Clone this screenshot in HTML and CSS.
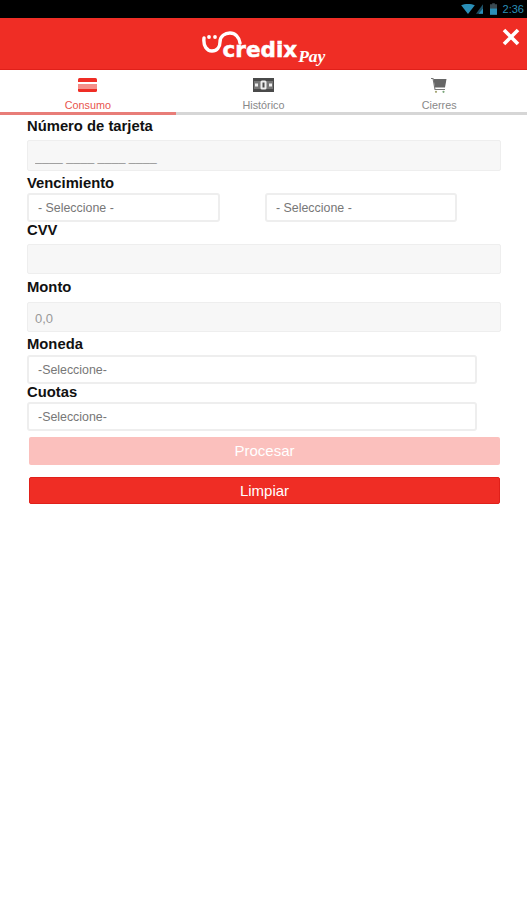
FILE: index.html
```html
<!DOCTYPE html>
<html lang="es">
<head>
    <meta charset="utf-8">
    <meta name="viewport" content="width=device-width, initial-scale=1.0">
    <title>Credix Pay</title>
    <link rel="stylesheet" href="styles.css">
</head>
<body>
    <div class="statusbar">
        <svg class="status-wifi" width="14" height="10" viewBox="0 0 15 11"><path d="M0 1.5 C4 -0.5 11 -0.5 15 1.5 L7.5 11 Z" fill="#2a8fb8"/></svg>
        <svg class="status-signal" width="7" height="10" viewBox="0 0 8 11"><path d="M8 0 V11 H0 Z" fill="#1d4f66"/><path d="M8 5 V11 H3 Z" fill="#2a8fb8"/></svg>
        <svg class="status-battery" width="7" height="12" viewBox="0 0 8 13"><path d="M2.5 0 H5.5 V1 H8 V13 H0 V1 H2.5 Z" fill="#3a4a52"/><rect y="6" width="8" height="7" fill="#2a8fb8"/></svg>
        <span class="status-time">2:36</span>
    </div>

    <header class="topbar">
        <span></span>
        <div class="logo">
            <svg class="logo-smile" width="40" height="24" viewBox="0 0 40 24">
                <path d="M2 7 C1 15 5 20 10 20 C15 20 18 16 18 11 C18 5 23 2 28 2 C33 2 37 6 38 12" fill="none" stroke="#fff" stroke-width="3.4" stroke-linecap="round"/>
                <circle cx="7" cy="6" r="1.9" fill="#fff"/>
                <circle cx="13" cy="6" r="1.9" fill="#fff"/>
            </svg>
            <span class="logo-name">credix</span>
            <span class="logo-pay">Pay</span>
        </div>
        <button class="close-btn" type="button" aria-label="Cerrar">
            <svg width="18" height="18" viewBox="0 0 18 18"><path d="M2 2 L16 16 M16 2 L2 16" stroke="#fff" stroke-width="3.6"/></svg>
        </button>
    </header>

    <nav class="tabs">
        <a class="tab tab-active">
            <span class="tab-icon">
                <svg width="19" height="14" viewBox="0 0 19 14">
                    <rect width="19" height="14" rx="1.5" fill="#ef2d25"/>
                    <rect y="4" width="19" height="2" fill="#fff"/>
                    <rect y="6" width="19" height="5" fill="#f58f89"/>
                </svg>
            </span>
            <span>Consumo</span>
        </a>
        <a class="tab">
            <span class="tab-icon">
                <svg width="21" height="14" viewBox="0 0 21 14">
                    <rect width="21" height="14" fill="#4a4a4a"/>
                    <rect x="1" y="3" width="19" height="8" fill="#777"/>
                    <rect x="7.5" y="2.5" width="6" height="9" rx="1.5" fill="#eee"/>
                    <rect x="9.5" y="4.5" width="2" height="5" fill="#4a4a4a"/>
                    <rect x="2" y="5.5" width="3" height="3" fill="#eee"/>
                    <rect x="16" y="5.5" width="3" height="3" fill="#eee"/>
                </svg>
            </span>
            <span>Histórico</span>
        </a>
        <a class="tab">
            <span class="tab-icon">
                <svg width="16" height="15" viewBox="0 0 16 15">
                    <path d="M0 0.5 H2 L4 11.5 H14" fill="none" stroke="#777" stroke-width="1.1"/>
                    <path d="M2.5 1 H15.5 L14 9.5 H4 Z" fill="#666"/>
                    <circle cx="5" cy="13.8" r="1.1" fill="#a3a36f"/>
                    <circle cx="12.5" cy="13.8" r="1.1" fill="#79a579"/>
                </svg>
            </span>
            <span>Cierres</span>
        </a>
    </nav>

    <form class="pay-form">
        <label class="field-label gap-6" for="tarjeta">Número de tarjeta</label>
        <input class="text-input card-input h-31" type="text" id="tarjeta" placeholder="____ ____ ____ ____">

        <label class="field-label top-4 gap-2">Vencimiento</label>
        <div class="expiry-row">
            <select class="select-input"><option>- Seleccione -</option></select>
            <select class="select-input"><option>- Seleccione -</option></select>
        </div>

        <label class="field-label gap-6" for="cvv">CVV</label>
        <input class="text-input h-30" type="text" id="cvv">

        <label class="field-label top-5 gap-7" for="monto">Monto</label>
        <input class="text-input h-30" type="text" id="monto" placeholder="0,0">

        <label class="field-label top-4 gap-3" for="moneda">Moneda</label>
        <select class="select-input select-wide h-28" id="moneda"><option>-Seleccione-</option></select>

        <label class="field-label gap-2" for="cuotas">Cuotas</label>
        <select class="select-input select-wide" id="cuotas"><option>-Seleccione-</option></select>

        <button class="btn btn-disabled" type="button">Procesar</button>
        <button class="btn btn-primary" type="button">Limpiar</button>
    </form>
</body>
</html>
```

FILE: styles.css
```css
* {
    box-sizing: border-box;
}
body {
    margin: 0;
    font-family: "Liberation Sans", Arial, sans-serif;
    background-color: #fff;
}
.statusbar {
    height: 18px;
    background-color: #000;
    display: flex;
    justify-content: flex-end;
    align-items: center;
    gap: 1px;
    padding-right: 3px;
}
.status-battery {
    margin-left: 6px;
    margin-right: 5px;
}
.status-time {
    color: #2a8fb8;
    font-size: 11px;
}
.topbar {
    height: 52px;
    background-color: #ef2d25;
    border-bottom: 1px solid #e0201a;
    display: grid;
    grid-template-columns: 1fr auto 1fr;
}
.logo {
    display: flex;
    align-items: flex-start;
    color: #fff;
    padding-top: 13px;
}
.logo-smile {
    margin-right: -19px;
}
.logo-name {
    font-family: "DejaVu Sans", sans-serif;
    font-weight: bold;
    font-size: 21.5px;
    line-height: 26px;
    margin-top: 6px;
    -webkit-text-stroke: 0.5px #fff;
}
.logo-pay {
    font-family: "Liberation Serif", serif;
    font-style: italic;
    font-weight: bold;
    font-size: 17.5px;
    line-height: 20px;
    margin-top: 15px;
    margin-left: 1px;
}
.close-btn {
    justify-self: end;
    align-self: start;
    border: 0;
    padding: 0;
    margin: 10px 7px 0 0;
    background: none;
    height: 18px;
}
.tabs {
    height: 45px;
    display: grid;
    grid-template-columns: repeat(3, 1fr);
    border-bottom: 3px solid #d6d6d6;
}
.tab {
    height: 45px;
    display: flex;
    flex-direction: column;
    align-items: center;
    padding-top: 8px;
    gap: 5px;
    color: #888;
    font-size: 10.8px;
    line-height: 12px;
    border-bottom: 3px solid #d6d6d6;
}
.tab-icon {
    display: block;
    height: 16px;
}
.tab-icon svg {
    display: block;
}
.tab-active {
    color: #e8554e;
    border-bottom-color: #e87d78;
}
.pay-form {
    padding: 3px 0 0 27px;
    width: 501px;
}
.field-label {
    display: block;
    font-size: 14.8px;
    font-weight: bold;
    line-height: 16px;
    color: #111;
}
.top-4 { margin-top: 4px; }
.top-5 { margin-top: 5px; }
.gap-2 { margin-bottom: 2px; }
.gap-3 { margin-bottom: 3px; }
.gap-6 { margin-bottom: 6px; }
.gap-7 { margin-bottom: 7px; }
.text-input {
    display: block;
    width: 100%;
    padding: 2px 7px 0;
    border: 1px solid #eee;
    border-radius: 2px;
    background-color: #f7f7f7;
    font-family: inherit;
    font-size: 13px;
}
.card-input {
    font-size: 12.5px;
}
.text-input::placeholder {
    color: #999;
}
.h-31 { height: 31px; }
.h-30 { height: 30px; }
.h-28 { height: 28px; }
.expiry-row {
    display: flex;
    gap: 45px;
}
.select-input {
    appearance: none;
    display: block;
    width: 193px;
    height: 29px;
    padding: 0 9px;
    border: 2px solid #eee;
    border-radius: 3px;
    background-color: #fff;
    color: #777;
    font-family: inherit;
    font-size: 12.4px;
}
.expiry-row .select-input:last-child {
    width: 192px;
}
.select-wide {
    width: 450px;
}
.btn {
    display: block;
    width: 471px;
    margin-left: 2px;
    border: 0;
    border-radius: 2px;
    color: #fff;
    font-family: inherit;
    font-size: 15px;
    padding: 0 0 1px;
}
.btn-disabled {
    height: 28px;
    margin-top: 6px;
    background-color: #fbc0bd;
}
.btn-primary {
    height: 27px;
    margin-top: 12px;
    background-color: #ef2d25;
    border: 1px solid #e0201a;
}
```
